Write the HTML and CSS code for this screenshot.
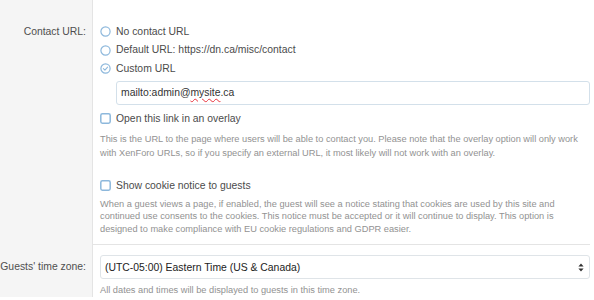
FILE: index.html
```html
<!DOCTYPE html>
<html>
<head>
<meta charset="utf-8">
<link rel="stylesheet" href="styles.css">
</head>
<body>
<div class="form">
  <div class="row">
    <div class="row-label"></div>
    <div class="row-body top-body">
      <div class="explain top-explain">Used for the contact page.</div>
    </div>
  </div>

  <div class="row">
    <div class="row-label"><span class="label first-label">Contact URL:</span></div>
    <div class="row-body contact-body">
      <ul class="choices">
        <li class="choice">
          <svg class="icon" width="11" height="11" viewBox="0 0 11 11"><circle cx="5.5" cy="5.5" r="4.6" fill="none" stroke="#8db8dc" stroke-width="1.2"/></svg>
          <span>No contact URL</span>
        </li>
        <li class="choice">
          <svg class="icon" width="11" height="11" viewBox="0 0 11 11"><circle cx="5.5" cy="5.5" r="4.6" fill="none" stroke="#8db8dc" stroke-width="1.2"/></svg>
          <span>Default URL: https://dn.ca/misc/contact</span>
        </li>
        <li class="choice">
          <svg class="icon" width="11" height="11" viewBox="0 0 11 11"><circle cx="5.5" cy="5.5" r="4.6" fill="none" stroke="#8db8dc" stroke-width="1.2"/><path d="M3.4 5.7 L4.9 7.1 L7.6 4.2" fill="none" stroke="#8db8dc" stroke-width="1.1" stroke-linecap="round" stroke-linejoin="round"/></svg>
          <span>Custom URL</span>
        </li>
      </ul>
      <div class="input">mailto:admin@<span class="misspelled">mysite</span>.ca</div>
      <div class="choice check-choice">
        <svg class="icon" width="11" height="11" viewBox="0 0 11 11"><rect x="0.8" y="0.8" width="9.4" height="9.4" rx="1.6" fill="none" stroke="#8db8dc" stroke-width="1.5"/></svg>
        <span>Open this link in an overlay</span>
      </div>
      <div class="explain explain-a">This is the URL to the page where users will be able to contact you. Please note that the overlay option will only work<br>with XenForo URLs, so if you specify an external URL, it most likely will not work with an overlay.</div>
    </div>
  </div>

  <div class="row">
    <div class="row-label"></div>
    <div class="row-body cookie-body">
      <div class="choice check-choice">
        <svg class="icon" width="11" height="11" viewBox="0 0 11 11"><rect x="0.8" y="0.8" width="9.4" height="9.4" rx="1.6" fill="none" stroke="#8db8dc" stroke-width="1.5"/></svg>
        <span>Show cookie notice to guests</span>
      </div>
      <div class="explain explain-b">When a guest views a page, if enabled, the guest will see a notice stating that cookies are used by this site and<br>continued use consents to the cookies. This notice must be accepted or it will continue to display. This option is<br>designed to make compliance with EU cookie regulations and GDPR easier.</div>
    </div>
  </div>

  <div class="row">
    <div class="row-label"><span class="label tz-label">Guests' time zone:</span></div>
    <div class="row-body tz-body">
      <div class="select">
        <span>(UTC-05:00) Eastern Time (US &amp; Canada)</span>
        <svg class="arrows" width="6" height="9" viewBox="0 0 6 9"><path d="M3 0.5 L5.6 3.6 L0.4 3.6 Z M3 8.5 L5.6 5.4 L0.4 5.4 Z" fill="#333"/></svg>
      </div>
      <div class="explain explain-c">All dates and times will be displayed to guests in this time zone.</div>
    </div>
  </div>
</div>
</body>
</html>
```

FILE: styles.css
```css
html, body {
  margin: 0;
  padding: 0;
  background: #ffffff;
}

body {
  font-family: "Liberation Sans", Arial, sans-serif;
  color: #4b4b4b;
  font-size: 10.4px;
  width: 594px;
  height: 300px;
  overflow: hidden;
}

.form {
  display: flex;
  flex-direction: column;
}

.row {
  display: flex;
}

.row-label {
  flex: none;
  width: 93px;
  box-sizing: border-box;
  background: #f5f5f5;
  border-right: 1px solid #e4e4e4;
  text-align: right;
  padding-right: 6px;
  white-space: nowrap;
}

.label {
  display: block;
  line-height: 18.5px;
  color: #4f4f4f;
}

.first-label {
  margin-top: 10.5px;
}

.tz-label {
  margin-top: 10px;
  line-height: 24px;
}

.row-body {
  flex: 1;
  min-width: 0;
  padding-left: 7px;
  margin-right: 4px;
}

.top-body {
  height: 12px;
  overflow: hidden;
}

.top-explain {
  margin-top: -10px;
  padding-left: 34px;
}

.choices {
  list-style: none;
  margin: 10.5px 0 0 0;
  padding: 0;
}

.choice {
  display: flex;
  align-items: center;
  gap: 5px;
  line-height: 18.5px;
}

.icon {
  flex: none;
  display: block;
}

.input {
  margin: 2.5px 0 0 16px;
  height: 24px;
  box-sizing: border-box;
  border: 1px solid #d3e0ea;
  border-radius: 3px;
  padding: 0 4px;
  line-height: 22px;
  color: #333;
  background: #fff;
}

.misspelled {
  text-decoration: underline wavy #e8323c;
  text-decoration-thickness: 1px;
  text-underline-offset: 2px;
}

.check-choice {
  margin-top: 5px;
  line-height: 18px;
}

.explain {
  font-size: 9.25px;
  color: #929292;
  white-space: nowrap;
}

.explain-a {
  margin-top: 4px;
  line-height: 14px;
}

.cookie-body {
  padding-bottom: 9px;
  border-bottom: 1px solid #e4e4e4;
}

.cookie-body .check-choice {
  margin-top: 17px;
}

.explain-b {
  margin-top: 3px;
  line-height: 12.6px;
}

.tz-body {
  padding-top: 10px;
}

.select {
  height: 24px;
  box-sizing: border-box;
  border: 1px solid #dfe4e8;
  border-radius: 3px;
  display: flex;
  align-items: center;
  justify-content: space-between;
  padding: 0 5px 0 4px;
  font-size: 10.4px;
  color: #222;
  background: #fff;
}

.arrows {
  display: block;
  flex: none;
}

.explain-c {
  margin-top: 4px;
  line-height: 14px;
}
```
